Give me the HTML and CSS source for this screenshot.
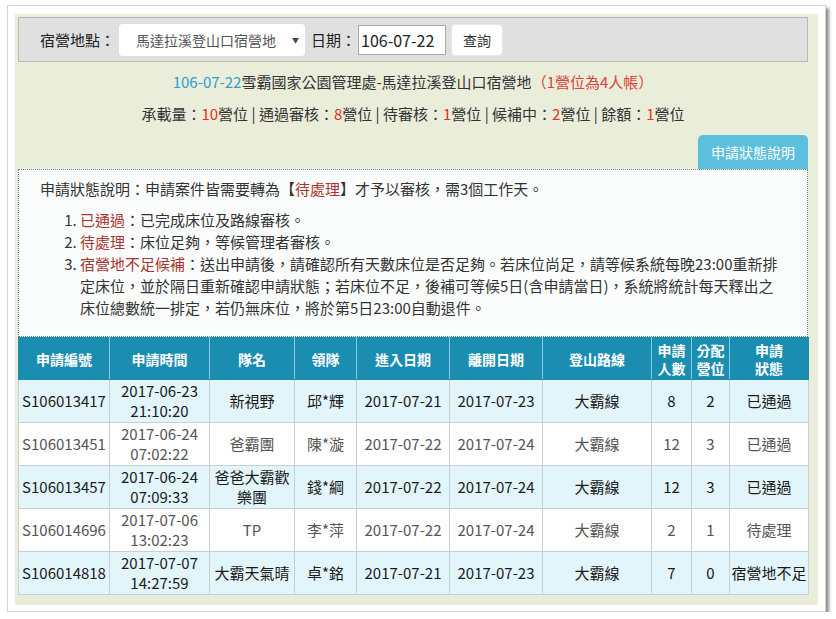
FILE: index.html
```html
<!DOCTYPE html>
<html lang="zh-Hant">
<head>
<meta charset="utf-8">
<title>宿營地申請狀態</title>
<link rel="stylesheet" href="styles.css">
</head>
<body>
<div class="frame">
  <div class="panel">
    <div class="search-bar">
      <span class="label">宿營地點：</span>
      <div class="select"><span>馬達拉溪登山口宿營地</span><span class="arrow">▼</span></div>
      <span class="label label-date">日期：</span>
      <div class="date-input">106-07-22</div>
      <button class="btn">查詢</button>
    </div>

    <p class="title"><span class="blue">106-07-22</span>雪霸國家公園管理處-馬達拉溪登山口宿營地<span class="red">（1營位為4人帳）</span></p>
    <p class="stats">承載量：<span class="num">10</span>營位 | 通過審核：<span class="num">8</span>營位 | 待審核：<span class="num">1</span>營位 | 候補中：<span class="num">2</span>營位 | 餘額：<span class="num">1</span>營位</p>

    <div class="help-row"><button class="btn-info">申請狀態說明</button></div>

    <div class="note">
      <p class="note-head">申請狀態說明：申請案件皆需要轉為【<span class="dark-red">待處理</span>】才予以審核，需3個工作天。</p>
      <ol class="note-list">
        <li><span class="dark-red">已通過</span>：已完成床位及路線審核。</li>
        <li><span class="dark-red">待處理</span>：床位足夠，等候管理者審核。</li>
        <li><span class="dark-red">宿營地不足候補</span>：送出申請後，請確認所有天數床位是否足夠。若床位尚足，請等候系統每晚23:00重新排定床位，並於隔日重新確認申請狀態；若床位不足，後補可等候5日(含申請當日)，系統將統計每天釋出之床位總數統一排定，若仍無床位，將於第5日23:00自動退件。</li>
      </ol>
    </div>

    <table class="list">
      <colgroup>
        <col class="c1"><col class="c2"><col class="c3"><col class="c4"><col class="c5">
        <col class="c6"><col class="c7"><col class="c8"><col class="c9"><col class="c10">
      </colgroup>
      <thead>
        <tr>
          <th>申請編號</th><th>申請時間</th><th>隊名</th><th>領隊</th><th>進入日期</th>
          <th>離開日期</th><th>登山路線</th><th>申請<br>人數</th><th>分配<br>營位</th><th>申請<br>狀態</th>
        </tr>
      </thead>
      <tbody>
        <tr class="odd">
          <td>S106013417</td><td>2017-06-23 21:10:20</td><td>新視野</td><td>邱*輝</td><td>2017-07-21</td>
          <td>2017-07-23</td><td>大霸線</td><td>8</td><td>2</td><td>已通過</td>
        </tr>
        <tr class="even">
          <td>S106013451</td><td>2017-06-24 07:02:22</td><td>爸霸團</td><td>陳*漩</td><td>2017-07-22</td>
          <td>2017-07-24</td><td>大霸線</td><td>12</td><td>3</td><td>已通過</td>
        </tr>
        <tr class="odd">
          <td>S106013457</td><td>2017-06-24 07:09:33</td><td>爸爸大霸歡樂團</td><td>錢*綱</td><td>2017-07-22</td>
          <td>2017-07-24</td><td>大霸線</td><td>12</td><td>3</td><td>已通過</td>
        </tr>
        <tr class="even">
          <td>S106014696</td><td>2017-07-06 13:02:23</td><td>TP</td><td>李*萍</td><td>2017-07-22</td>
          <td>2017-07-24</td><td>大霸線</td><td>2</td><td>1</td><td>待處理</td>
        </tr>
        <tr class="odd">
          <td>S106014818</td><td>2017-07-07 14:27:59</td><td>大霸天氣晴</td><td>卓*銘</td><td>2017-07-21</td>
          <td>2017-07-23</td><td>大霸線</td><td>7</td><td>0</td><td>宿營地不足</td>
        </tr>
      </tbody>
    </table>
  </div>
</div>
</body>
</html>
```

FILE: styles.css
```css
* {
  box-sizing: border-box;
}

body {
  margin: 0;
  background: #ffffff;
  font-family: "Noto Sans CJK TC", "Noto Sans", sans-serif;
  font-size: 15px;
  color: #333333;
}

p {
  margin: 0;
}

.frame {
  margin: 5px 0 0 7px;
  width: 819px;
  height: 607px;
  border: 1px solid #d4d4d4;
  padding: 8px 7px 6px 7px;
  background: #ffffff;
  box-shadow: 3px 3px 3px rgba(0, 0, 0, 0.45);
}

.panel {
  height: 100%;
  background: #e9edd9;
  padding: 3px 10px 0 3px;
}

.search-bar {
  display: flex;
  align-items: center;
  height: 45px;
  background: #e0e0e0;
  border: 1px solid #b8b8b8;
  padding-left: 21px;
}

.label {
  font-size: 15px;
  color: #222222;
  line-height: 20px;
}

.select {
  display: flex;
  align-items: center;
  justify-content: space-between;
  margin-left: 4px;
  width: 186px;
  height: 32px;
  background: #ffffff;
  border-radius: 4px;
  padding: 0 6px 0 17px;
  font-size: 14px;
  color: #555555;
}

.arrow {
  font-size: 7px;
  color: #444444;
}

.label-date {
  margin-left: 6px;
}

.date-input {
  margin-left: 2px;
  width: 88px;
  height: 30px;
  background: #ffffff;
  border: 1px solid #a9a9a9;
  padding-left: 2px;
  font-size: 16px;
  line-height: 28px;
  color: #222222;
}

.btn {
  margin-left: 5px;
  width: 52px;
  height: 32px;
  background: #ffffff;
  border: 1px solid #e6e6e6;
  border-radius: 4px;
  font-family: inherit;
  font-size: 14px;
  color: #333333;
  padding: 0;
}

.title {
  margin-top: 9px;
  text-align: center;
  line-height: 22px;
  color: #333333;
}

.blue {
  color: #2e9fd3;
}

.red {
  color: #d9433a;
}

.stats {
  margin-top: 10px;
  text-align: center;
  line-height: 22px;
}

.num {
  color: #e0321f;
}

.help-row {
  display: flex;
  justify-content: flex-end;
  margin-top: 10px;
}

.btn-info {
  width: 110px;
  height: 34px;
  background: #5bbfdd;
  border: none;
  border-radius: 5px 5px 0 0;
  color: #ffffff;
  font-family: inherit;
  font-size: 14px;
  padding: 0;
}

.note {
  height: 168px;
  background: #fbfdfd;
  border: 1px dotted #5f8f93;
  padding: 8px 22px 0 21px;
}

.note-head {
  line-height: 22px;
}

.note-list {
  margin: 9px 0 0 0;
  padding-left: 40px;
  line-height: 22px;
}

.dark-red {
  color: #a8352f;
}

.list {
  width: 790px;
  border-collapse: collapse;
  table-layout: fixed;
}

.c1 { width: 91px; }
.c2 { width: 100px; }
.c3 { width: 85px; }
.c4 { width: 62px; }
.c5 { width: 93px; }
.c6 { width: 93px; }
.c7 { width: 109px; }
.c8 { width: 40px; }
.c9 { width: 38px; }
.c10 { width: 79px; }

.list th {
  height: 42px;
  padding: 0;
  background: #1a8db1;
  color: #ffffff;
  font-size: 14px;
  font-weight: bold;
  line-height: 18px;
  border-left: 1px solid #7fcbe2;
  border-right: 1px solid #7fcbe2;
  border-top: 1px solid #1a8db1;
  border-bottom: 1px solid #1a8db1;
}

.list th:first-child {
  border-left-color: #1a8db1;
}

.list th:last-child {
  border-right-color: #1a8db1;
}

.list td {
  height: 43px;
  padding: 0;
  border: 1px solid #c8d0d4;
  text-align: center;
  line-height: 20px;
  font-size: 15px;
}

.list tr.odd td {
  background: #e2f5fb;
  color: #1a1a1a;
}

.list tr.even td {
  background: #ffffff;
  color: #555555;
}
```
